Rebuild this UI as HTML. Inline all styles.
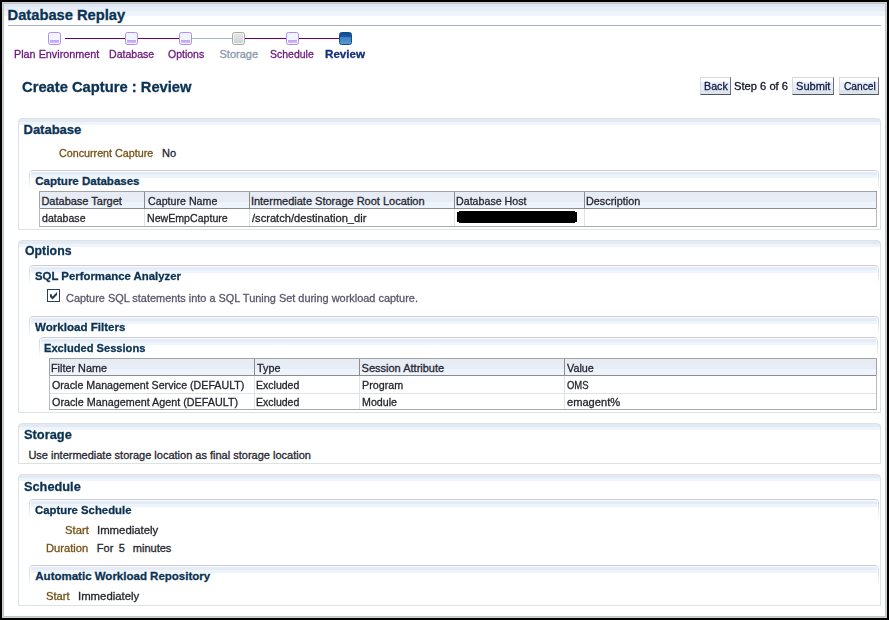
<!DOCTYPE html>
<html><head><meta charset="utf-8"><title>Database Replay</title>
<style>
html,body{margin:0;padding:0;width:889px;height:620px;overflow:hidden;background:#fff}
.t{position:absolute;white-space:pre;line-height:20px;font-family:'Liberation Sans',sans-serif;-webkit-text-stroke:0.3px currentColor}
</style></head><body>
<div style="position:absolute;left:0px;top:0px;width:889px;height:620px;background:#000"></div>
<div style="position:absolute;left:2px;top:2px;width:885px;height:616px;background:#c8d0d0"></div>
<div style="position:absolute;left:3px;top:3px;width:883px;height:614px;background:#bec6c6"></div>
<div style="position:absolute;left:4px;top:4px;width:881px;height:612px;background:#fff"></div>
<div style="position:absolute;left:4px;top:4px;width:881px;height:3px;background:#dfe7f7"></div>
<div style="position:absolute;left:4px;top:7px;width:881px;height:4px;background:#e6edf5"></div>
<div style="position:absolute;left:4px;top:11px;width:881px;height:5px;background:#eef4fc"></div>
<div class="t" style="left:7.60px;top:5px;font-size:14.7px;font-weight:bold;color:#0a3254;">Database Replay</div>
<div style="position:absolute;left:8px;top:25px;width:873px;height:1px;background:#a9b0c6"></div>
<div style="position:absolute;left:65px;top:38px;width:60px;height:1px;background:#690070"></div>
<div style="position:absolute;left:138px;top:38px;width:41px;height:1px;background:#690070"></div>
<div style="position:absolute;left:192px;top:38px;width:40px;height:1px;background:#a4b6d4"></div>
<div style="position:absolute;left:245px;top:38px;width:41px;height:1px;background:#690070"></div>
<div style="position:absolute;left:299px;top:38px;width:40px;height:1px;background:#690070"></div>
<div style="position:absolute;left:48px;top:32px;width:11px;height:11px;border:1px solid #b68af0;border-radius:2.5px;background:#eef6ff;"></div>
<div style="position:absolute;left:50px;top:40px;width:9px;height:3px;background:linear-gradient(#c69ef0,#d8bcf6);"></div>
<div style="position:absolute;left:125px;top:32px;width:11px;height:11px;border:1px solid #b68af0;border-radius:2.5px;background:#eef6ff;"></div>
<div style="position:absolute;left:127px;top:40px;width:9px;height:3px;background:linear-gradient(#c69ef0,#d8bcf6);"></div>
<div style="position:absolute;left:179px;top:32px;width:11px;height:11px;border:1px solid #b68af0;border-radius:2.5px;background:#eef6ff;"></div>
<div style="position:absolute;left:181px;top:40px;width:9px;height:3px;background:linear-gradient(#c69ef0,#d8bcf6);"></div>
<div style="position:absolute;left:232px;top:32px;width:11px;height:11px;border:1px solid #a6a8a8;border-radius:2.5px;background:#f4f4ee;"></div>
<div style="position:absolute;left:234px;top:34px;width:9px;height:9px;background:linear-gradient(#dfe6e6,#dadcdc 50%,#cfd0da);"></div>
<div style="position:absolute;left:286px;top:32px;width:11px;height:11px;border:1px solid #b68af0;border-radius:2.5px;background:#eef6ff;"></div>
<div style="position:absolute;left:288px;top:40px;width:9px;height:3px;background:linear-gradient(#c69ef0,#d8bcf6);"></div>
<div style="position:absolute;left:339px;top:32px;width:11px;height:11px;border:1px solid #0e4a8c;border-radius:2.5px;background:linear-gradient(#124a90,#1c58a8 35%,#3a80c0 36%,#5a9ad2);"></div>
<div class="t" style="left:13.52px;top:44px;font-size:11px;font-weight:normal;color:#6a167c;transform:scaleX(0.9826);transform-origin:0 0;">Plan Environment</div>
<div class="t" style="left:108.84px;top:44px;font-size:11px;font-weight:normal;color:#6a167c;transform:scaleX(0.9609);transform-origin:0 0;">Database</div>
<div class="t" style="left:167.70px;top:44px;font-size:11px;font-weight:normal;color:#6a167c;transform:scaleX(0.9553);transform-origin:0 0;">Options</div>
<div class="t" style="left:219.50px;top:44px;font-size:11px;font-weight:normal;color:#8a98a8;">Storage</div>
<div class="t" style="left:269.75px;top:44px;font-size:11px;font-weight:normal;color:#6a167c;transform:scaleX(0.9533);transform-origin:0 0;">Schedule</div>
<div class="t" style="left:324.89px;top:44px;font-size:11.5px;font-weight:bold;color:#15307a;transform:scaleX(1.0103);transform-origin:0 0;">Review</div>
<div class="t" style="left:21.70px;top:77px;font-size:14.8px;font-weight:bold;color:#0a3254;transform:scaleX(0.9959);transform-origin:0 0;">Create Capture : Review</div>
<div style="position:absolute;left:700px;top:77px;width:31px;height:18px;box-sizing:border-box;border:1px solid;border-color:#d6dada #6c7074 #50545a #d6dada;background:linear-gradient(#fff 0,#fbfcfe 4px,#e8eff9 4px,#e8eff9 12px,#e0e4e8 12px,#e0e4e8 14px,#d8e4f2 14px);"></div>
<div class="t" style="left:703.63px;top:76px;font-size:11px;font-weight:normal;color:#101a40;transform:scaleX(0.9739);transform-origin:0 0;">Back</div>
<div class="t" style="left:733.98px;top:76px;font-size:11px;font-weight:normal;color:#14142a;transform:scaleX(1.0154);transform-origin:0 0;">Step 6 of 6</div>
<div style="position:absolute;left:792px;top:77px;width:42px;height:18px;box-sizing:border-box;border:1px solid;border-color:#d6dada #6c7074 #50545a #d6dada;background:linear-gradient(#fff 0,#fbfcfe 4px,#e8eff9 4px,#e8eff9 12px,#e0e4e8 12px,#e0e4e8 14px,#d8e4f2 14px);"></div>
<div class="t" style="left:795.79px;top:76px;font-size:11px;font-weight:normal;color:#101a40;transform:scaleX(1.0061);transform-origin:0 0;">Submit</div>
<div style="position:absolute;left:839px;top:77px;width:40px;height:18px;box-sizing:border-box;border:1px solid;border-color:#d6dada #6c7074 #50545a #d6dada;background:linear-gradient(#fff 0,#fbfcfe 4px,#e8eff9 4px,#e8eff9 12px,#e0e4e8 12px,#e0e4e8 14px,#d8e4f2 14px);"></div>
<div class="t" style="left:843.50px;top:76px;font-size:11px;font-weight:normal;color:#101a40;transform:scaleX(0.9265);transform-origin:0 0;">Cancel</div>
<div style="position:absolute;left:18px;top:118px;width:863px;height:112px;box-sizing:border-box;border:1px solid #dbe3e3;border-radius:4px 4px 0 0;background:linear-gradient(#e4eaf4 0,#e4eaf4 3px,#eef4fc 3px,#eef4fc 6px,#fff 6px);"></div>
<div class="t" style="left:23.50px;top:120px;font-size:13px;font-weight:bold;color:#0a3254;">Database</div>
<div class="t" style="left:59.40px;top:143px;font-size:11px;font-weight:normal;color:#735214;transform:scaleX(0.9750);transform-origin:0 0;">Concurrent Capture</div>
<div class="t" style="left:162.00px;top:143px;font-size:11px;font-weight:normal;color:#262630;">No</div>
<div style="position:absolute;left:29px;top:170px;width:850px;height:20px;box-sizing:border-box;border-top:1px solid #cbccd6;border-left:1px solid #d2dae2;border-right:1px solid #d2dae2;border-radius:4px 4px 0 0;-webkit-mask-image:linear-gradient(#000,#000 30%,transparent);"></div>
<div style="position:absolute;left:31px;top:171px;width:846px;height:7px;background:linear-gradient(#f8fbff 0,#f8fbff 1px,#e6ecf5 1px,#e6ecf5 4px,#eef4fc 4px);border-radius:3px 3px 0 0;"></div>
<div class="t" style="left:35.30px;top:171px;font-size:11.5px;font-weight:bold;color:#0a3254;">Capture Databases</div>
<div style="position:absolute;left:39px;top:191px;width:838px;height:18px;box-sizing:border-box;border:1px solid #a0a4a4;border-bottom-color:#8a8c8e;background:linear-gradient(#e6ebf4,#e8edf5 60%,#eef4fc 60%);"></div>
<div style="position:absolute;left:39px;top:208px;width:838px;height:19px;box-sizing:border-box;border:1px solid #b8bcbc;border-top:none;border-bottom-color:#a8aaaa;"></div>
<div style="position:absolute;left:144px;top:192px;width:1px;height:16px;background:#8a8c92"></div>
<div style="position:absolute;left:144px;top:209px;width:1px;height:17px;background:#dde3e3"></div>
<div style="position:absolute;left:249px;top:192px;width:1px;height:16px;background:#8a8c92"></div>
<div style="position:absolute;left:249px;top:209px;width:1px;height:17px;background:#dde3e3"></div>
<div style="position:absolute;left:454px;top:192px;width:1px;height:16px;background:#8a8c92"></div>
<div style="position:absolute;left:454px;top:209px;width:1px;height:17px;background:#dde3e3"></div>
<div style="position:absolute;left:584px;top:192px;width:1px;height:16px;background:#8a8c92"></div>
<div style="position:absolute;left:584px;top:209px;width:1px;height:17px;background:#dde3e3"></div>
<div class="t" style="left:41.40px;top:191px;font-size:11px;font-weight:normal;color:#262630;">Database Target</div>
<div class="t" style="left:147.60px;top:191px;font-size:11px;font-weight:normal;color:#262630;transform:scaleX(0.9690);transform-origin:0 0;">Capture Name</div>
<div class="t" style="left:250.90px;top:191px;font-size:11px;font-weight:normal;color:#262630;">Intermediate Storage Root Location</div>
<div class="t" style="left:456.43px;top:191px;font-size:11px;font-weight:normal;color:#262630;transform:scaleX(0.9694);transform-origin:0 0;">Database Host</div>
<div class="t" style="left:586.41px;top:191px;font-size:11px;font-weight:normal;color:#262630;transform:scaleX(0.9852);transform-origin:0 0;">Description</div>
<div class="t" style="left:42.40px;top:208px;font-size:11px;font-weight:normal;color:#262630;transform:scaleX(0.9622);transform-origin:0 0;">database</div>
<div class="t" style="left:146.64px;top:208px;font-size:11px;font-weight:normal;color:#262630;transform:scaleX(0.9639);transform-origin:0 0;">NewEmpCapture</div>
<div class="t" style="left:252.00px;top:208px;font-size:11px;font-weight:normal;color:#262630;transform:scaleX(1.0115);transform-origin:0 0;">/scratch/destination_dir</div>
<div style="position:absolute;left:459px;top:211px;width:116px;height:12px;background:#000"></div>
<div style="position:absolute;left:457px;top:212px;width:120px;height:10px;background:#000"></div>
<div style="position:absolute;left:18px;top:240px;width:863px;height:173px;box-sizing:border-box;border:1px solid #dbe3e3;border-radius:4px 4px 0 0;background:linear-gradient(#e4eaf4 0,#e4eaf4 3px,#eef4fc 3px,#eef4fc 6px,#fff 6px);"></div>
<div class="t" style="left:24.50px;top:241px;font-size:13px;font-weight:bold;color:#0a3254;transform:scaleX(0.9469);transform-origin:0 0;">Options</div>
<div style="position:absolute;left:29px;top:265px;width:850px;height:20px;box-sizing:border-box;border-top:1px solid #cbccd6;border-left:1px solid #d2dae2;border-right:1px solid #d2dae2;border-radius:4px 4px 0 0;-webkit-mask-image:linear-gradient(#000,#000 30%,transparent);"></div>
<div style="position:absolute;left:31px;top:266px;width:846px;height:7px;background:linear-gradient(#f8fbff 0,#f8fbff 1px,#e6ecf5 1px,#e6ecf5 4px,#eef4fc 4px);border-radius:3px 3px 0 0;"></div>
<div class="t" style="left:35.20px;top:266px;font-size:11.5px;font-weight:bold;color:#0a3254;transform:scaleX(0.9885);transform-origin:0 0;">SQL Performance Analyzer</div>
<div style="position:absolute;left:47px;top:289px;width:13px;height:13px;box-sizing:border-box;border:1px solid #2b3d58;background:#fff"></div>
<svg style="position:absolute;left:44px;top:286px" width="20" height="20" viewBox="0 0 20 20"><path d="M6 8 L6 11 L8.5 13.5 L13 9 L13 6 L8.5 10.5 L8 10 L8 8.5 Z" fill="#2b3d58"/></svg>
<div class="t" style="left:66.00px;top:288px;font-size:11px;font-weight:normal;color:#5a586c;transform:scaleX(0.9929);transform-origin:0 0;">Capture SQL statements into a SQL Tuning Set during workload capture.</div>
<div style="position:absolute;left:29px;top:316px;width:850px;height:20px;box-sizing:border-box;border-top:1px solid #cbccd6;border-left:1px solid #d2dae2;border-right:1px solid #d2dae2;border-radius:4px 4px 0 0;-webkit-mask-image:linear-gradient(#000,#000 30%,transparent);"></div>
<div style="position:absolute;left:31px;top:317px;width:846px;height:7px;background:linear-gradient(#f8fbff 0,#f8fbff 1px,#e6ecf5 1px,#e6ecf5 4px,#eef4fc 4px);border-radius:3px 3px 0 0;"></div>
<div class="t" style="left:35.20px;top:317px;font-size:11.5px;font-weight:bold;color:#0a3254;transform:scaleX(1.0056);transform-origin:0 0;">Workload Filters</div>
<div style="position:absolute;left:39px;top:337px;width:839px;height:20px;box-sizing:border-box;border-top:1px solid #cbccd6;border-left:1px solid #d2dae2;border-right:1px solid #d2dae2;border-radius:4px 4px 0 0;-webkit-mask-image:linear-gradient(#000,#000 30%,transparent);"></div>
<div style="position:absolute;left:41px;top:338px;width:835px;height:7px;background:linear-gradient(#f8fbff 0,#f8fbff 1px,#e6ecf5 1px,#e6ecf5 4px,#eef4fc 4px);border-radius:3px 3px 0 0;"></div>
<div class="t" style="left:44.33px;top:338px;font-size:11.5px;font-weight:bold;color:#0a3254;transform:scaleX(0.9673);transform-origin:0 0;">Excluded Sessions</div>
<div style="position:absolute;left:49px;top:358px;width:828px;height:18px;box-sizing:border-box;border:1px solid #a0a4a4;border-bottom-color:#8a8c8e;background:linear-gradient(#e6ebf4,#e8edf5 60%,#eef4fc 60%);"></div>
<div style="position:absolute;left:49px;top:375px;width:828px;height:35px;box-sizing:border-box;border:1px solid #b8bcbc;border-top:none;border-bottom-color:#a8aaaa;"></div>
<div style="position:absolute;left:254px;top:359px;width:1px;height:16px;background:#8a8c92"></div>
<div style="position:absolute;left:254px;top:376px;width:1px;height:33px;background:#dde3e3"></div>
<div style="position:absolute;left:359px;top:359px;width:1px;height:16px;background:#8a8c92"></div>
<div style="position:absolute;left:359px;top:376px;width:1px;height:33px;background:#dde3e3"></div>
<div style="position:absolute;left:564px;top:359px;width:1px;height:16px;background:#8a8c92"></div>
<div style="position:absolute;left:564px;top:376px;width:1px;height:33px;background:#dde3e3"></div>
<div style="position:absolute;left:50px;top:393px;width:826px;height:1px;background:#dde3e3"></div>
<div class="t" style="left:51.41px;top:358px;font-size:11px;font-weight:normal;color:#262630;transform:scaleX(0.9857);transform-origin:0 0;">Filter Name</div>
<div class="t" style="left:257.40px;top:358px;font-size:11px;font-weight:normal;color:#262630;transform:scaleX(0.9833);transform-origin:0 0;">Type</div>
<div class="t" style="left:361.60px;top:358px;font-size:11px;font-weight:normal;color:#262630;">Session Attribute</div>
<div class="t" style="left:567.20px;top:358px;font-size:11px;font-weight:normal;color:#262630;transform:scaleX(0.9815);transform-origin:0 0;">Value</div>
<div class="t" style="left:52.40px;top:375px;font-size:11px;font-weight:normal;color:#262630;transform:scaleX(0.9692);transform-origin:0 0;">Oracle Management Service (DEFAULT)</div>
<div class="t" style="left:256.44px;top:375px;font-size:11px;font-weight:normal;color:#262630;transform:scaleX(0.9568);transform-origin:0 0;">Excluded</div>
<div class="t" style="left:361.62px;top:375px;font-size:11px;font-weight:normal;color:#262630;transform:scaleX(0.9780);transform-origin:0 0;">Program</div>
<div class="t" style="left:567.20px;top:375px;font-size:11px;font-weight:normal;color:#262630;transform:scaleX(0.8600);transform-origin:0 0;">OMS</div>
<div class="t" style="left:52.40px;top:392px;font-size:11px;font-weight:normal;color:#262630;transform:scaleX(0.9799);transform-origin:0 0;">Oracle Management Agent (DEFAULT)</div>
<div class="t" style="left:256.44px;top:392px;font-size:11px;font-weight:normal;color:#262630;transform:scaleX(0.9568);transform-origin:0 0;">Excluded</div>
<div class="t" style="left:361.63px;top:392px;font-size:11px;font-weight:normal;color:#262630;transform:scaleX(0.9686);transform-origin:0 0;">Module</div>
<div class="t" style="left:567.20px;top:392px;font-size:11px;font-weight:normal;color:#262630;transform:scaleX(1.0096);transform-origin:0 0;">emagent%</div>
<div style="position:absolute;left:18px;top:423px;width:863px;height:41px;box-sizing:border-box;border:1px solid #dbe3e3;border-radius:4px 4px 0 0;background:linear-gradient(#e4eaf4 0,#e4eaf4 3px,#eef4fc 3px,#eef4fc 6px,#fff 6px);"></div>
<div class="t" style="left:23.51px;top:425px;font-size:13px;font-weight:bold;color:#0a3254;transform:scaleX(0.9872);transform-origin:0 0;">Storage</div>
<div class="t" style="left:28.40px;top:445px;font-size:11px;font-weight:normal;color:#262630;">Use intermediate storage location as final storage location</div>
<div style="position:absolute;left:18px;top:474px;width:863px;height:132px;box-sizing:border-box;border:1px solid #dbe3e3;border-radius:4px 4px 0 0;background:linear-gradient(#e4eaf4 0,#e4eaf4 3px,#eef4fc 3px,#eef4fc 6px,#fff 6px);"></div>
<div class="t" style="left:23.52px;top:477px;font-size:13px;font-weight:bold;color:#0a3254;transform:scaleX(0.9821);transform-origin:0 0;">Schedule</div>
<div style="position:absolute;left:29px;top:499px;width:850px;height:20px;box-sizing:border-box;border-top:1px solid #cbccd6;border-left:1px solid #d2dae2;border-right:1px solid #d2dae2;border-radius:4px 4px 0 0;-webkit-mask-image:linear-gradient(#000,#000 30%,transparent);"></div>
<div style="position:absolute;left:31px;top:500px;width:846px;height:7px;background:linear-gradient(#f8fbff 0,#f8fbff 1px,#e6ecf5 1px,#e6ecf5 4px,#eef4fc 4px);border-radius:3px 3px 0 0;"></div>
<div class="t" style="left:35.30px;top:500px;font-size:11.5px;font-weight:bold;color:#0a3254;transform:scaleX(0.9867);transform-origin:0 0;">Capture Schedule</div>
<div class="t" style="left:64.88px;top:520px;font-size:11px;font-weight:normal;color:#735214;transform:scaleX(1.0227);transform-origin:0 0;">Start</div>
<div class="t" style="left:96.77px;top:520px;font-size:11px;font-weight:normal;color:#262630;transform:scaleX(1.0328);transform-origin:0 0;">Immediately</div>
<div class="t" style="left:46.38px;top:538px;font-size:11px;font-weight:normal;color:#735214;transform:scaleX(1.0150);transform-origin:0 0;">Duration</div>
<div class="t" style="left:96.80px;top:538px;font-size:11px;font-weight:normal;color:#262630;">For</div>
<div class="t" style="left:118.80px;top:538px;font-size:11px;font-weight:normal;color:#262630;">5</div>
<div class="t" style="left:132.80px;top:538px;font-size:11px;font-weight:normal;color:#262630;">minutes</div>
<div style="position:absolute;left:29px;top:565px;width:850px;height:20px;box-sizing:border-box;border-top:1px solid #cbccd6;border-left:1px solid #d2dae2;border-right:1px solid #d2dae2;border-radius:4px 4px 0 0;-webkit-mask-image:linear-gradient(#000,#000 30%,transparent);"></div>
<div style="position:absolute;left:31px;top:566px;width:846px;height:7px;background:linear-gradient(#f8fbff 0,#f8fbff 1px,#e6ecf5 1px,#e6ecf5 4px,#eef4fc 4px);border-radius:3px 3px 0 0;"></div>
<div class="t" style="left:35.30px;top:566px;font-size:11.5px;font-weight:bold;color:#0a3254;">Automatic Workload Repository</div>
<div class="t" style="left:46.19px;top:586px;font-size:11px;font-weight:normal;color:#735214;transform:scaleX(1.0136);transform-origin:0 0;">Start</div>
<div class="t" style="left:78.37px;top:586px;font-size:11px;font-weight:normal;color:#262630;transform:scaleX(1.0328);transform-origin:0 0;">Immediately</div>
</body></html>
